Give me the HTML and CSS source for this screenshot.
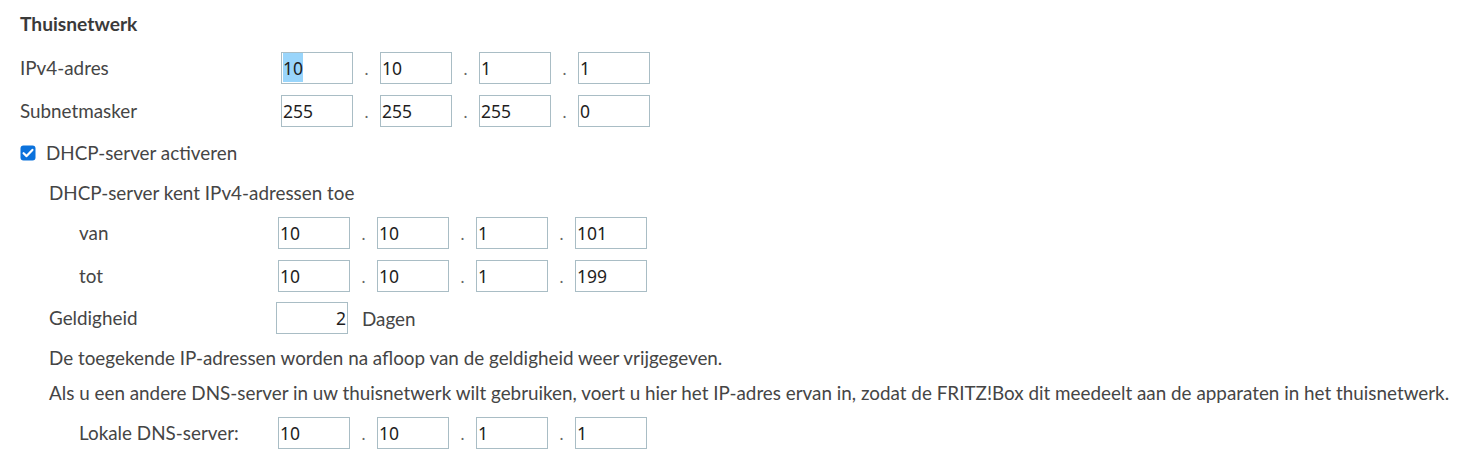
FILE: index.html
```html
<!DOCTYPE html>
<html lang="nl">
<head>
<meta charset="utf-8">
<title>Thuisnetwerk</title>
<link rel="stylesheet" href="styles.css">
</head>
<body>
<div class="page">
  <h2 class="title">Thuisnetwerk</h2>

  <div class="row row-first">
    <label class="label label-top">IPv4-adres</label>
    <div class="ip">
      <input class="oct oct-selected" type="text" value="10"><span class="dot">.</span>
      <input class="oct" type="text" value="10"><span class="dot">.</span>
      <input class="oct" type="text" value="1"><span class="dot">.</span>
      <input class="oct" type="text" value="1">
    </div>
  </div>

  <div class="row row-gap11">
    <label class="label label-top">Subnetmasker</label>
    <div class="ip">
      <input class="oct" type="text" value="255"><span class="dot">.</span>
      <input class="oct" type="text" value="255"><span class="dot">.</span>
      <input class="oct" type="text" value="255"><span class="dot">.</span>
      <input class="oct" type="text" value="0">
    </div>
  </div>

  <label class="check-line">
    <input class="check" type="checkbox" checked>
    <span class="check-box">
      <svg width="16" height="16" viewBox="0 0 16 16" aria-hidden="true">
        <rect x="0.5" y="0.5" width="15" height="15" rx="3" fill="#0b72dc"/>
        <path d="M3.6 8.2 L6.6 11.1 L12.4 4.9" fill="none" stroke="#ffffff" stroke-width="2.2" stroke-linecap="round" stroke-linejoin="round"/>
      </svg>
    </span>
    <span>DHCP-server activeren</span>
  </label>

  <div class="sub">
    <p class="subhead">DHCP-server kent IPv4-adressen toe</p>

    <div class="row row-van">
      <label class="label label-deep">van</label>
      <div class="ip">
        <input class="oct" type="text" value="10"><span class="dot">.</span>
        <input class="oct" type="text" value="10"><span class="dot">.</span>
        <input class="oct" type="text" value="1"><span class="dot">.</span>
        <input class="oct" type="text" value="101">
      </div>
    </div>

    <div class="row row-gap11">
      <label class="label label-deep">tot</label>
      <div class="ip">
        <input class="oct" type="text" value="10"><span class="dot">.</span>
        <input class="oct" type="text" value="10"><span class="dot">.</span>
        <input class="oct" type="text" value="1"><span class="dot">.</span>
        <input class="oct" type="text" value="199">
      </div>
    </div>

    <div class="row row-gap10">
      <label class="label label-sub">Geldigheid</label>
      <input class="oct oct-right" type="text" value="2">
      <span class="unit">Dagen</span>
    </div>

    <p class="note note-first">De toegekende IP-adressen worden na afloop van de geldigheid weer vrijgegeven.</p>
    <p class="note note-second">Als u een andere DNS-server in uw thuisnetwerk wilt gebruiken, voert u hier het IP-adres ervan in, zodat de FRITZ!Box dit meedeelt aan de apparaten in het thuisnetwerk.</p>

    <div class="row row-dns">
      <label class="label label-deep">Lokale DNS-server:</label>
      <div class="ip">
        <input class="oct" type="text" value="10"><span class="dot">.</span>
        <input class="oct" type="text" value="10"><span class="dot">.</span>
        <input class="oct" type="text" value="1"><span class="dot">.</span>
        <input class="oct" type="text" value="1">
      </div>
    </div>
  </div>
</div>
</body>
</html>
```

FILE: styles.css
```css
html, body {
  margin: 0;
  padding: 0;
  background: #ffffff;
}

.page {
  padding: 10px 0 0 20px;
  font-family: "Lato", "Liberation Sans", sans-serif;
  font-size: 18.85px;
  color: #454545;
}

.title {
  margin: 0;
  font-size: 19.2px;
  font-weight: 700;
  line-height: 28px;
  color: #3a3a3a;
}

.row {
  display: flex;
  align-items: center;
  height: 32px;
}

.row-first { margin-top: 14px; }
.row-gap11 { margin-top: 11px; }
.row-gap10 { margin-top: 10px; }
.row-van { margin-top: 12px; }
.row-dns { margin-top: 12px; }

.label {
  flex: none;
  line-height: 24px;
}

.label-top { width: 261px; }
.label-sub { width: 227px; }
.label-deep { width: 199px; padding-left: 30px; }

.ip {
  display: flex;
  align-items: center;
}

.oct {
  box-sizing: border-box;
  width: 72px;
  height: 32px;
  margin: 0;
  padding: 0 1px;
  border: 1px solid #a9bdc5;
  border-radius: 0;
  font-family: "Noto Sans", "Open Sans", sans-serif;
  font-size: 17.5px;
  color: #1e1e1e;
  background: #ffffff;
  outline: none;
}

.oct-selected {
  background: linear-gradient(#99d5fb, #99d5fb) no-repeat 0 0 / 20px 29px, #ffffff;
  background-origin: content-box;
}

.oct-right {
  text-align: right;
}

.dot {
  width: 27px;
  text-align: center;
  color: #666666;
  font-size: 17px;
  line-height: 20px;
  padding-top: 1px;
}

.unit {
  margin-left: 14px;
}

.check-line {
  position: relative;
  display: flex;
  align-items: center;
  margin-top: 14px;
  line-height: 24px;
}

.check {
  position: absolute;
  left: 0;
  top: 4px;
  width: 16px;
  height: 16px;
  margin: 0;
  opacity: 0;
}

.check-box {
  display: flex;
  width: 16px;
  height: 16px;
  margin-right: 10px;
}

.sub {
  padding-left: 29px;
}

.subhead {
  margin: 16px 0 0;
  line-height: 24px;
}

.note {
  margin: 0;
  line-height: 24px;
}

.note-first { margin-top: 12px; }
.note-second { margin-top: 11px; }
```
